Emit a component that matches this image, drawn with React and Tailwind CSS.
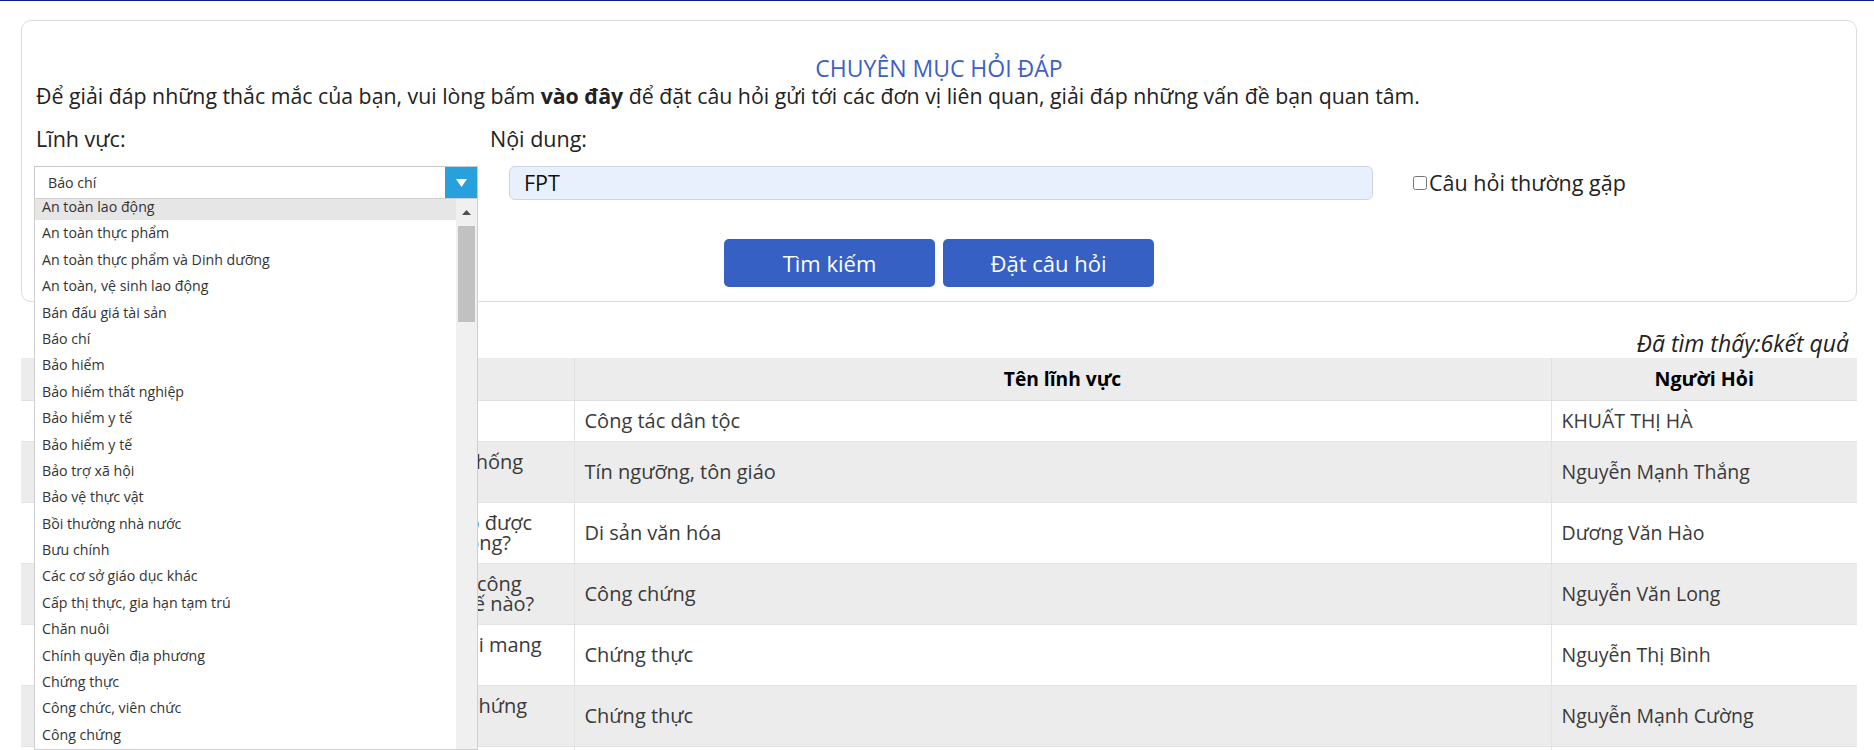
const items = [
  "An toàn lao động",
  "An toàn thực phẩm",
  "An toàn thực phẩm và Dinh dưỡng",
  "An toàn, vệ sinh lao động",
  "Bán đấu giá tài sản",
  "Báo chí",
  "Bảo hiểm",
  "Bảo hiểm thất nghiệp",
  "Bảo hiểm y tế",
  "Bảo hiểm y tế",
  "Bảo trợ xã hội",
  "Bảo vệ thực vật",
  "Bồi thường nhà nước",
  "Bưu chính",
  "Các cơ sở giáo dục khác",
  "Cấp thị thực, gia hạn tạm trú",
  "Chăn nuôi",
  "Chính quyền địa phương",
  "Chứng thực",
  "Công chức, viên chức",
  "Công chứng",
  "Công tác dân tộc",
];

const rows = [
  { q: ["Chính sách hỗ trợ đồng bào dân tộc?"], f: "Công tác dân tộc", n: "KHUẤT THỊ HÀ" },
  { q: ["Xin hỏi việc lợi dụng tôn giáo để tuyên truyền, chống", "phá Nhà nước bị xử lý ra sao?"], f: "Tín ngưỡng, tôn giáo", n: "Nguyễn Mạnh Thắng" },
  { q: ["Gia đình tôi tìm thấy cổ vật ở trong vườn nhà có được", "giữ lại, hay phải nộp cho cơ quan Nhà nước không?"], f: "Di sản văn hóa", n: "Dương Văn Hào" },
  { q: ["Thủ tục công chứng hợp đồng vay ở văn phòng công", "chứng tư nhân ở địa phương được thực hiện thế nào?"], f: "Công chứng", n: "Nguyễn Văn Long" },
  { q: ["Bản sao chứng thực từ bản chính có giá trị gì khi mang", "đi nộp hồ sơ hay không?"], f: "Chứng thực", n: "Nguyễn Thị Bình" },
  { q: ["Người nước ngoài có được chứng thực chữ ký, chứng", "thực bản sao tại xã?"], f: "Chứng thực", n: "Nguyễn Mạnh Cường" },
  { q: ["Thủ tục chứng thực hợp đồng?"], f: "Chứng thực", n: "Trần Văn Minh" },
];

export default function App() {
  return (
    <div className="relative h-[750px] overflow-hidden border-t border-[#0b1c8f] bg-white font-['Open_Sans',sans-serif] text-[#222]">
      {/* Card */}
      <div className="ml-[21px] mr-[17px] mt-[19px] h-[282px] rounded-[10px] border border-[#dcdcdc] px-[12px] pt-[33px]">
        <div className="text-center text-[23px] leading-[28px] text-[#3d5fc6]">CHUYÊN MỤC HỎI ĐÁP</div>
        <p className="pl-[2px] text-[21.3px] leading-[28px] text-[#222]">
          Để giải đáp những thắc mắc của bạn, vui lòng bấm <b>vào đây</b> để đặt câu hỏi gửi tới các đơn vị liên quan, giải đáp những vấn đề bạn quan tâm.
        </p>
        <div className="mt-[15px] flex text-[21.5px] leading-[28px]">
          <div className="w-[456px] pl-[2px]">Lĩnh vực:</div>
          <div>Nội dung:</div>
        </div>
        <div className="mt-[13px] flex items-center">
          <div className="relative w-[444px]">
            <div className="flex h-[34px] border border-[#c9c9c9] bg-white">
              <div className="flex-1 pl-[13px] text-[14.2px] leading-[32px] text-[#333]">Báo chí</div>
              <div className="flex w-[32px] items-center justify-center bg-[#27a0dc]">
                <svg width="11" height="8" viewBox="0 0 11 8"><path d="M0 0 H11 L5.5 8 Z" fill="#fff" /></svg>
              </div>
            </div>
            {/* Open dropdown list */}
            <div className="absolute left-0 top-[32px] z-10 flex h-[552px] w-[444px] border border-[#cfcfcf] bg-white">
              <div className="flex-1 overflow-hidden">
                <div className="-mt-[5px]">
                  {items.map((t, i) => (
                    <div
                      key={i}
                      className={i === 0 ? "h-[26.4px] bg-[#e6e6e6] pl-[7px] text-[14.2px] leading-[26.4px] text-[#333]" : "h-[26.4px] pl-[7px] text-[14.2px] leading-[26.4px] text-[#333]"}
                    >
                      {t}
                    </div>
                  ))}
                </div>
              </div>
              <div className="flex w-[21px] flex-col items-center bg-[#f0f0f0]">
                <div className="flex h-[27px] items-center justify-center">
                  <svg width="9" height="5" viewBox="0 0 9 5"><path d="M0 5 L4.5 0 L9 5 Z" fill="#505050" /></svg>
                </div>
                <div className="h-[96px] w-[17px] bg-[#c1c1c1]" />
              </div>
            </div>
          </div>
          <div className="ml-[31px] flex h-[34px] w-[864px] items-center rounded-[6px] border border-[#cdd5e0] bg-[#e8f0fe] pl-[14px] text-[21.5px] text-[#111]">
            FPT
          </div>
          <label className="ml-[40px] flex items-center text-[21.5px] leading-[28px] text-[#222]">
            <input type="checkbox" className="m-0 mr-[2px] h-[14px] w-[14px]" />
            Câu hỏi thường gặp
          </label>
        </div>
        <div className="mt-[39px] flex justify-center gap-[8px]">
          <button className="h-[48px] w-[211px] rounded-[5px] bg-[#3760c4] text-[22px] text-white">Tìm kiếm</button>
          <button className="h-[48px] w-[211px] rounded-[5px] bg-[#3760c4] text-[22px] text-white">Đặt câu hỏi</button>
        </div>
      </div>

      {/* Results */}
      <div className="ml-[21px] mr-[17px]">
        <div className="mt-[27px] pr-[8px] text-right text-[23px] italic leading-[28px] text-[#222]">Đã tìm thấy:6kết quả</div>
        <table className="mt-[1px] w-full table-fixed border-collapse text-[20px] leading-[20px]">
          <colgroup>
            <col className="w-[553px]" />
            <col className="w-[977px]" />
            <col className="w-[306px]" />
          </colgroup>
          <thead>
            <tr className="h-[42px] bg-[#ececec]">
              <th className="border-b border-r border-[#e0e0e0] text-[19.2px] font-bold text-black">Câu hỏi</th>
              <th className="border-b border-r border-[#e0e0e0] text-[19.2px] font-bold text-black">Tên lĩnh vực</th>
              <th className="border-b border-[#e0e0e0] text-[19.6px] font-bold text-black">Người Hỏi</th>
            </tr>
          </thead>
          <tbody>
            {rows.map((r, i) => (
              <tr key={i} className={i % 2 === 1 ? "bg-[#ececec]" : "bg-white"}>
                <td className="border-b border-r border-[#e3e3e3] py-[10px] pl-[16px] pr-[10px] text-left align-middle text-[#3a3a3a]">
                  {r.q.map((l, j) => (
                    <div key={j} className="whitespace-nowrap">{l}</div>
                  ))}
                </td>
                <td className="border-b border-r border-[#e3e3e3] px-[10px] py-[10px] text-left align-middle text-[#3a3a3a]">{r.f}</td>
                <td className="border-b border-[#e3e3e3] px-[10px] py-[10px] text-left align-middle text-[19.5px] text-[#3a3a3a]">{r.n}</td>
              </tr>
            ))}
          </tbody>
        </table>
      </div>
    </div>
  );
}
